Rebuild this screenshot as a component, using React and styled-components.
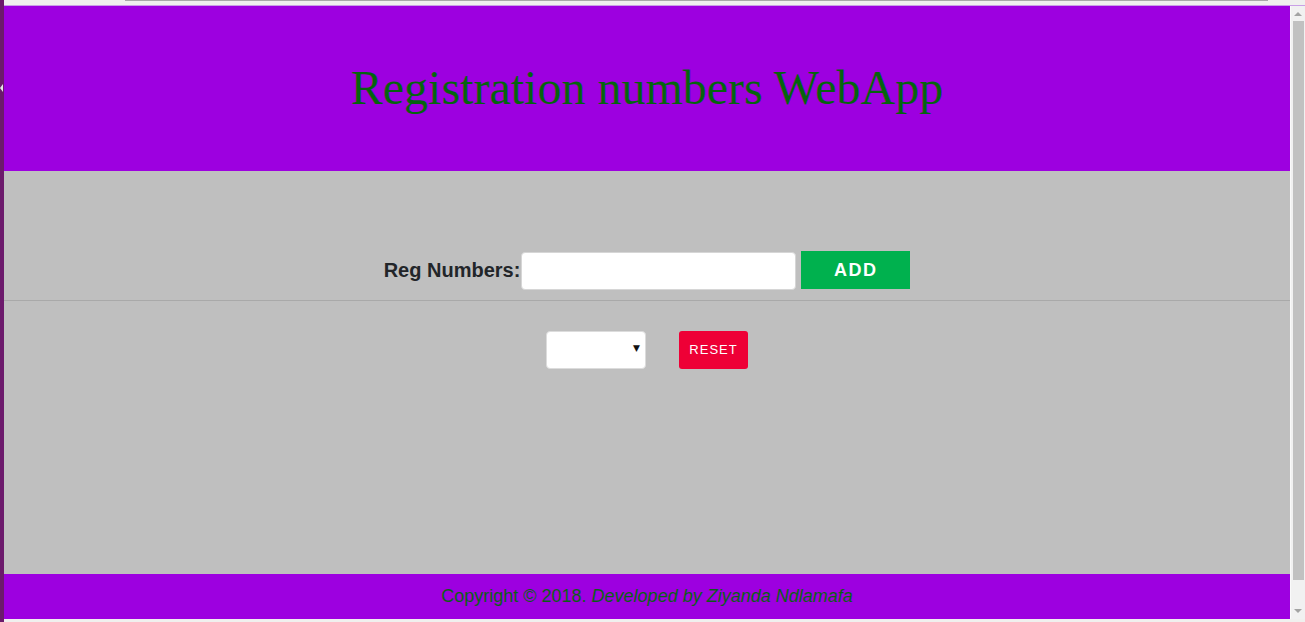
import React, { useState } from "react";
import styled, { createGlobalStyle } from "styled-components";

const GlobalStyle = createGlobalStyle`
  html, body {
    margin: 0;
    padding: 0;
    overflow: hidden;
  }
`;

const Frame = styled.div`
  display: flex;
  width: 1305px;
  height: 622px;
`;

const LeftEdge = styled.div`
  position: relative;
  width: 4px;
  background: #6c1a6c;

  &::after {
    content: "";
    position: absolute;
    top: 84px;
    left: 0;
    border-top: 4px solid transparent;
    border-bottom: 4px solid transparent;
    border-right: 3px solid #e6e6e6;
  }
`;

const Window = styled.div`
  flex: 1;
  display: flex;
  flex-direction: column;
  background: #f0f0ee;
`;

const TopStrip = styled.div`
  height: 5px;
  padding-left: 121px;
  padding-right: 37px;
  border-bottom: 1px solid #c9a0e6;

  div {
    height: 1px;
    background: #a8a8a8;
  }
`;

const Body = styled.div`
  flex: 1;
  display: flex;
  min-height: 0;
`;

const Page = styled.div`
  flex: 1;
  display: flex;
  flex-direction: column;
  background: #bfbfbf;
`;

const Header = styled.header`
  height: 165px;
  display: flex;
  align-items: center;
  justify-content: center;
  background: #9d00e0;

  h1 {
    margin: 0 0 3px;
    font-family: "Liberation Serif", "Times New Roman", serif;
    font-size: 48px;
    font-weight: 400;
    color: #06630f;
  }
`;

const Main = styled.main`
  flex: 1;
  padding-top: 80px;
`;

const FormRow = styled.div`
  display: flex;
  align-items: center;
  justify-content: center;
  padding-bottom: 10px;
  border-bottom: 1px solid #a9a9a9;

  label {
    font-family: "Liberation Sans", Arial, sans-serif;
    font-size: 20px;
    font-weight: bold;
    color: #222529;
    margin-right: 1px;
  }
`;

const TextInput = styled.input`
  box-sizing: border-box;
  width: 275px;
  height: 38px;
  margin-top: 1px;
  border: 1px solid #d6d6d6;
  border-radius: 4px;
  background: #fff;
  outline: none;
  font-size: 16px;
`;

const AddButton = styled.button`
  width: 109px;
  height: 38px;
  margin-left: 5px;
  margin-bottom: 1px;
  border: none;
  background: #00b14e;
  color: #fff;
  font-family: "Liberation Sans", Arial, sans-serif;
  font-size: 18px;
  font-weight: bold;
  letter-spacing: 1.5px;
  cursor: pointer;
`;

const FilterRow = styled.div`
  display: flex;
  justify-content: center;
  align-items: center;
  gap: 33px;
  margin-top: 30px;
`;

const SelectBox = styled.div`
  position: relative;
  width: 100px;
  height: 38px;

  select {
    box-sizing: border-box;
    width: 100%;
    height: 100%;
    appearance: none;
    border: 1px solid #dcdcdc;
    border-radius: 4px;
    background: #fff;
    outline: none;
  }

  &::after {
    content: "▼";
    position: absolute;
    right: 6px;
    top: 12px;
    font-size: 9px;
    color: #111;
    pointer-events: none;
    font-family: "DejaVu Sans", sans-serif;
  }
`;

const ResetButton = styled.button`
  width: 69px;
  height: 38px;
  padding: 0 0 2px;
  border: none;
  border-radius: 3px;
  background: #ee0036;
  color: #fff;
  font-family: "Liberation Sans", Arial, sans-serif;
  font-size: 13px;
  letter-spacing: 1px;
  cursor: pointer;
`;

const Footer = styled.footer`
  height: 45px;
  display: flex;
  align-items: center;
  justify-content: center;
  background: #9d00e0;
  font-family: "Liberation Sans", Arial, sans-serif;
  font-size: 18px;
  color: #0b5e17;

  em {
    margin-left: 5px;
  }
`;

const Scrollbar = styled.div`
  width: 15px;
  display: flex;
  flex-direction: column;
  align-items: center;
  background: #f1f1f1;
  border-left: 1px solid #fafafa;
  box-sizing: border-box;
`;

const Arrow = styled.div`
  width: 0;
  height: 0;
  margin: ${(p) => (p.$down ? "7px 0 6px" : "6px 0 5px")};
  border-left: 4px solid transparent;
  border-right: 4px solid transparent;
  ${(p) => (p.$down ? "border-top: 4px solid #a3a3a3;" : "border-bottom: 4px solid #a3a3a3;")}
`;

const Thumb = styled.div`
  width: 11px;
  flex: 1;
  margin-bottom: 22px;
  background: #c1c1c1;
`;

const BottomStrip = styled.div`
  height: 3px;
`;

const App = () => {
  const [reg, setReg] = useState("");

  return (
    <Frame>
      <GlobalStyle />
      <LeftEdge />
      <Window>
        <TopStrip><div /></TopStrip>
        <Body>
          <Page>
            <Header>
              <h1>Registration numbers WebApp</h1>
            </Header>
            <Main>
              <FormRow>
                <label htmlFor="reg">Reg Numbers:</label>
                <TextInput id="reg" value={reg} onChange={(e) => setReg(e.target.value)} />
                <AddButton>ADD</AddButton>
              </FormRow>
              <FilterRow>
                <SelectBox>
                  <select defaultValue="">
                    <option value=""></option>
                  </select>
                </SelectBox>
                <ResetButton>RESET</ResetButton>
              </FilterRow>
            </Main>
            <Footer>
              Copyright © 2018. <em>Developed by Ziyanda Ndlamafa</em>
            </Footer>
          </Page>
          <Scrollbar>
            <Arrow />
            <Thumb />
            <Arrow $down />
          </Scrollbar>
        </Body>
        <BottomStrip />
      </Window>
    </Frame>
  );
};

export default App;
